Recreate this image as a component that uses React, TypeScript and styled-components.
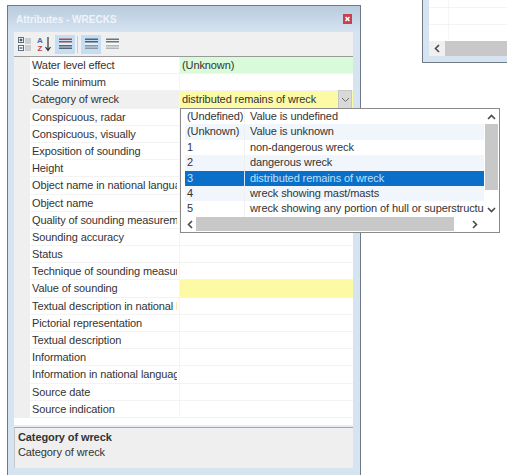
import * as React from "react";
import styled, { createGlobalStyle } from "styled-components";

const rows = [
  "Water level effect",
  "Scale minimum",
  "Category of wreck",
  "Conspicuous, radar",
  "Conspicuous, visually",
  "Exposition of sounding",
  "Height",
  "Object name in national language",
  "Object name",
  "Quality of sounding measurement",
  "Sounding accuracy",
  "Status",
  "Technique of sounding measurement",
  "Value of sounding",
  "Textual description in national language",
  "Pictorial representation",
  "Textual description",
  "Information",
  "Information in national language",
  "Source date",
  "Source indication",
];

const options = [
  ["(Undefined)", "Value is undefined"],
  ["(Unknown)", "Value is unknown"],
  ["1", "non-dangerous wreck"],
  ["2", "dangerous wreck"],
  ["3", "distributed remains of wreck"],
  ["4", "wreck showing mast/masts"],
  ["5", "wreck showing any portion of hull or superstructure"],
];

const GlobalStyle = createGlobalStyle`
  html, body {
    margin: 0;
    padding: 0;
    background: #ffffff;
    font-family: "Liberation Sans", sans-serif;
    font-size: 11px;
    letter-spacing: -0.1px;
    color: #333333;
    overflow: hidden;
  }
`;

const Page = styled.div`
  position: relative;
  width: 507px;
  height: 475px;
  overflow: hidden;
`;

const Window = styled.div`
  position: absolute;
  left: 7px;
  top: 5px;
  width: 354px;
  height: 470px;
  box-sizing: border-box;
  border: 1px solid #6f7a86;
  border-bottom: none;
  background: #d6e3f1;
  display: flex;
  flex-direction: column;
`;

const Title = styled.div`
  height: 26px;
  flex: none;
  background: linear-gradient(#b9cbdd, #d6e3f1);
  color: #eef4fa;
  font-weight: bold;
  font-size: 10px;
  letter-spacing: 0;
  display: flex;
  align-items: center;
  justify-content: space-between;
  padding: 0 8px 0 8px;
`;

const Body = styled.div`
  margin: 0 7px 0 6px;
  flex: 1;
  display: flex;
  flex-direction: column;
`;

const Toolbar = styled.div`
  height: 25px;
  box-sizing: border-box;
  flex: none;
  background: #f0f0f0;
  border-bottom: 1px solid #9a9a9a;
  display: flex;
  align-items: center;
  padding-left: 3px;
`;

const ToolButton = styled.div<{ $active?: boolean }>`
  width: ${(p) => (p.$active ? "20px" : "16px")};
  height: 19px;
  display: flex;
  align-items: center;
  justify-content: center;
  background: ${(p) => (p.$active ? "#c4dff5" : "transparent")};
  margin-right: 3px;
`;

const ToolSeparator = styled.div`
  width: 1px;
  height: 17px;
  background: #c4ccd4;
  margin: 0 3px 0 -1px;
`;

const Grid = styled.div`
  flex: none;
  height: 368px;
  background: #ffffff;
  display: flex;
  border-bottom: 2px solid #e6edf5;
`;

const Gutter = styled.div`
  width: 16px;
  height: 361px;
  background: #efefef;
`;

const RowList = styled.div`
  flex: 1;
`;

const Row = styled.div`
  height: 17.2px;
  display: grid;
  grid-template-columns: 150px 1fr;
  box-sizing: border-box;
  border-bottom: 1px solid #f3f3f3;
`;

const NameCell = styled.div<{ $active?: boolean }>`
  padding: 0 2px;
  line-height: 16px;
  background: ${(p) => (p.$active ? "#f0f0f0" : "#ffffff")};
  border-right: 1px solid #f5f5f5;
  min-width: 0;
`;

const NameText = styled.div`
  overflow: hidden;
  white-space: nowrap;
`;

const ValueCell = styled.div<{ $bg?: string }>`
  display: flex;
  min-width: 0;
  line-height: 16px;
  background: ${(p) => p.$bg || "#ffffff"};
  padding-left: 2px;
`;

const ValueText = styled.div`
  flex: 1;
`;

const ComboButton = styled.div`
  width: 14px;
  margin: -1px 1px -1px 0;
  background: #d9d9d9;
  border: 1px solid #c6c6c6;
  box-sizing: border-box;
  display: flex;
  align-items: center;
  justify-content: center;
`;

const Help = styled.div`
  height: 41px;
  flex: none;
  background: #efefef;
  border-top: 1px solid #a6a6a6;
  border-left: 1px solid #c8c8c8;
  box-sizing: border-box;
  padding: 2px 3px;
  line-height: 14.5px;
`;

const HelpTitle = styled.div`
  font-weight: bold;
`;

const Popup = styled.div`
  position: absolute;
  left: 180px;
  top: 108px;
  width: 320px;
  height: 125px;
  box-sizing: border-box;
  border: 1px solid #8a8a8a;
  background: #ffffff;
  z-index: 2;
  display: grid;
  grid-template-columns: 1fr 15px;
  grid-template-rows: 108px 1fr;
`;

const OptionList = styled.div`
  padding-left: 4px;
  min-width: 0;
`;

const Option = styled.div<{ $selected?: boolean; $odd?: boolean }>`
  height: 15.4px;
  line-height: 15px;
  display: grid;
  grid-template-columns: 60px 1fr;
  white-space: nowrap;
  overflow: hidden;
  color: ${(p) => (p.$selected ? "#bfe0fb" : "#333333")};
  background: ${(p) => (p.$selected ? "#0a6fc9" : p.$odd ? "#f0f6fc" : "#ffffff")};
`;

const OptionCode = styled.span<{ $selected?: boolean }>`
  padding-left: 2px;
  border-right: 1px solid ${(p) => (p.$selected ? "#cfe6fb" : "#f0f0f0")};
`;

const OptionText = styled.span`
  padding-left: 5px;
  overflow: hidden;
`;

const VScroll = styled.div`
  display: flex;
  flex-direction: column;
  align-items: center;
  padding: 4px 1px 0 0;
`;

const VThumb = styled.div`
  width: 13px;
  height: 66px;
  margin: 2px 0 15px;
  background: #c8c8c8;
`;

const HScroll = styled.div`
  display: flex;
  align-items: center;
  padding-left: 5px;
  height: 14px;
  grid-column: 1 / -1;
`;

const HThumb = styled.div`
  width: 258px;
  height: 100%;
  margin: 0 16px 0 1px;
  background: #c8c8c8;
`;

const OtherWindow = styled.div`
  position: absolute;
  left: 422px;
  top: -4px;
  width: 100px;
  height: 67px;
  box-sizing: border-box;
  border: 1px solid #6f7a86;
  background: #d6e3f1;
  padding: 0 0 6px 6px;
`;

const OtherInner = styled.div`
  background: #ffffff;
  height: 100%;
  display: flex;
  flex-direction: column;
`;

const OtherRows = styled.div`
  flex: 1;
  background:
    linear-gradient(#f3f3f3, #f3f3f3) 0 10px / 100% 1px no-repeat,
    linear-gradient(#f3f3f3, #f3f3f3) 0 27px / 100% 1px no-repeat,
    linear-gradient(#f5f5f5, #f5f5f5) 19px 0 / 1px 100% no-repeat;
`;

const OtherScroll = styled.div`
  height: 15px;
  display: flex;
  background: #c8c8c8;
`;

const OtherArrow = styled.div`
  width: 16px;
  background: #f0f0f0;
  display: flex;
  align-items: center;
  justify-content: center;
`;

const Chevron = ({ dir, bold }: { dir: "up" | "down" | "left" | "right"; bold?: boolean }) => {
  const points = {
    up: "1,6 4.5,2.5 8,6",
    down: "1,3 4.5,6.5 8,3",
    left: "6,1 2.5,4.5 6,8",
    right: "3,1 6.5,4.5 3,8",
  }[dir];
  return (
    <svg width="9" height="9" viewBox="0 0 9 9">
      <polyline
        points={points}
        fill="none"
        stroke={bold ? "#4a4a4a" : "#6a6a6a"}
        strokeWidth={bold ? 1.6 : 1}
      />
    </svg>
  );
};

const CloseIcon = () => (
  <svg width="9" height="10" viewBox="0 0 9 10">
    <rect width="9" height="10" fill="#c9404f" />
    <path d="M2.5 3 L6.5 7 M6.5 3 L2.5 7" stroke="#ffffff" strokeWidth="1.6" />
  </svg>
);

const CategorizedIcon = () => (
  <svg width="14" height="15" viewBox="0 0 14 15">
    <rect x="0.5" y="0.5" width="5" height="5" fill="#fff" stroke="#5a6f86" />
    <path d="M1.5 3 H4.5 M3 1.5 V4.5" stroke="#222" />
    <rect x="0.5" y="8.5" width="5" height="5" fill="#fff" stroke="#5a6f86" />
    <path d="M1.5 11 H4.5" stroke="#222" />
    <path d="M7 2 H13 M7 4 H13 M7 6 H13 M7 9 H13 M7 11 H13 M7 13 H13" stroke="#a7afb8" />
  </svg>
);

const SortIcon = () => (
  <svg width="15" height="16" viewBox="0 0 15 16">
    <text x="0" y="7" fontSize="8" fontWeight="bold" fill="#3d6fb4" fontFamily="Liberation Sans">A</text>
    <text x="0.5" y="15" fontSize="8" fontWeight="bold" fill="#c0433f" fontFamily="Liberation Sans">Z</text>
    <path d="M11 1 V14 M8.5 11 L11 14.5 L13.5 11" fill="none" stroke="#333" strokeWidth="1.2" />
  </svg>
);

const LinesIcon = ({ top, bottom }: { top: string; bottom: string }) => (
  <svg width="13" height="12" viewBox="0 0 13 12">
    <rect x="0" y="0.5" width="13" height="1.5" fill={top} />
    <rect x="0" y="3" width="13" height="1.5" fill={top} />
    <rect x="0" y="5.5" width="13" height="1" fill="#ffffff" />
    <rect x="0" y="7" width="13" height="1.5" fill={bottom} />
    <rect x="0" y="9.5" width="13" height="1.5" fill={bottom} />
  </svg>
);

export default function App() {
  return (
    <Page>
      <GlobalStyle />
      <OtherWindow>
        <OtherInner>
          <OtherRows />
          <OtherScroll>
            <OtherArrow>
              <Chevron dir="left" bold />
            </OtherArrow>
          </OtherScroll>
        </OtherInner>
      </OtherWindow>
      <Window>
        <Title>
          <span>Attributes - WRECKS</span>
          <CloseIcon />
        </Title>
        <Body>
          <Toolbar>
            <ToolButton>
              <CategorizedIcon />
            </ToolButton>
            <ToolButton>
              <SortIcon />
            </ToolButton>
            <ToolButton $active>
              <LinesIcon top="#b04a48" bottom="#5a6570" />
            </ToolButton>
            <ToolSeparator />
            <ToolButton $active>
              <LinesIcon top="#55606c" bottom="#8d96a0" />
            </ToolButton>
            <ToolButton>
              <LinesIcon top="#6d7680" bottom="#b0b5ba" />
            </ToolButton>
          </Toolbar>
          <Grid>
            <Gutter />
            <RowList>
              {rows.map((name, i) => (
                <Row key={name}>
                  <NameCell $active={i === 2}>
                    <NameText>{name}</NameText>
                  </NameCell>
                  <ValueCell $bg={i === 0 ? "#d9fbd9" : i === 2 || i === 13 ? "#fdfaa6" : undefined}>
                    <ValueText>
                      {i === 0 ? "(Unknown)" : i === 2 ? "distributed remains of wreck" : ""}
                    </ValueText>
                    {i === 2 && (
                      <ComboButton>
                        <Chevron dir="down" />
                      </ComboButton>
                    )}
                  </ValueCell>
                </Row>
              ))}
            </RowList>
          </Grid>
          <Help>
            <HelpTitle>Category of wreck</HelpTitle>
            Category of wreck
          </Help>
        </Body>
      </Window>
      <Popup>
        <OptionList>
          {options.map(([code, text], i) => (
            <Option key={code} $selected={i === 4} $odd={i % 2 === 1}>
              <OptionCode $selected={i === 4}>{code}</OptionCode>
              <OptionText>{text}</OptionText>
            </Option>
          ))}
        </OptionList>
        <VScroll>
          <Chevron dir="up" bold />
          <VThumb />
          <Chevron dir="down" bold />
        </VScroll>
        <HScroll>
          <Chevron dir="left" bold />
          <HThumb />
          <Chevron dir="right" bold />
        </HScroll>
      </Popup>
    </Page>
  );
}
